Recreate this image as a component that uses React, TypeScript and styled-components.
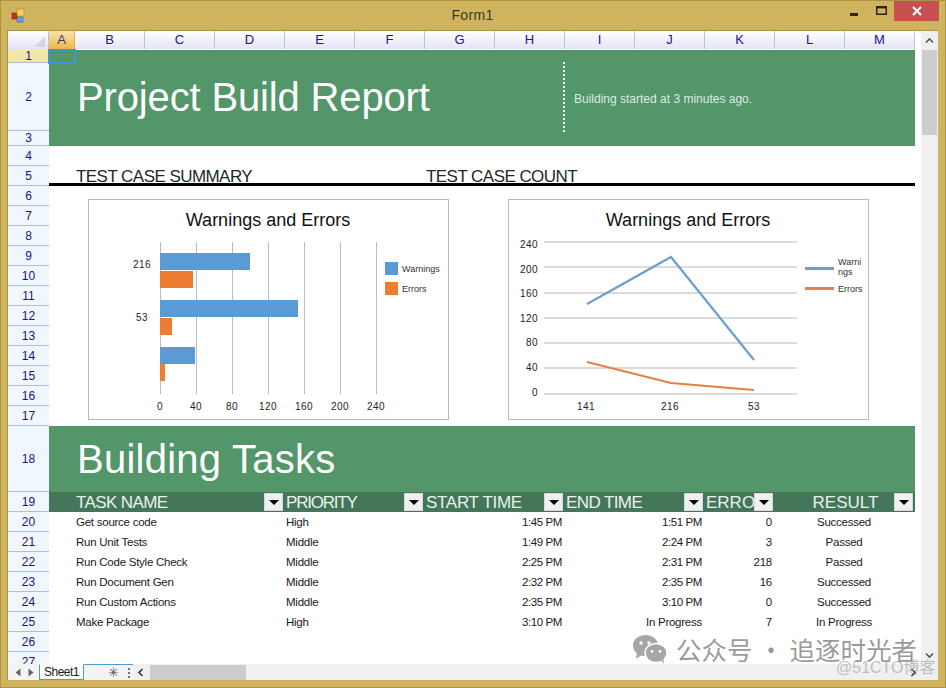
import React from "react";
import styled, { createGlobalStyle } from "styled-components";

const GlobalStyle = createGlobalStyle`
  html, body {
    margin: 0;
    padding: 0;
    background: #cfb35e;
    font-family: "Liberation Sans", Arial, sans-serif;
  }
`;

const Frame = styled.div`
  position: relative;
  width: 946px;
  height: 688px;
  box-sizing: border-box;
  border: 1px solid #ad9443;
  background: #cfb35e;
  display: flex;
  flex-direction: column;
  overflow: hidden;
`;

const TitleBar = styled.div`
  height: 29px;
  flex: none;
  display: flex;
  align-items: flex-start;
  padding: 0 6px 0 10px;
`;

const AppIcon = styled.svg`
  width: 16px;
  height: 16px;
  margin-top: 7px;
  flex: none;
`;

const Caption = styled.div`
  flex: 1;
  text-align: center;
  font-size: 14px;
  letter-spacing: 0.3px;
  line-height: 29px;
  color: #3a3a2c;
  padding-left: 78px;
`;

const WinButton = styled.div<{ $w: number; $close?: boolean }>`
  width: ${(p) => p.$w}px;
  height: 20px;
  display: flex;
  align-items: center;
  justify-content: center;
  background: ${(p) => (p.$close ? "#c75050" : "transparent")};
`;

const Client = styled.div`
  flex: 1;
  margin: 0 7px 7px 6px;
  border-top: 1px solid #ad9443;
  border-left: 1px solid #ad9443;
  background: #ffffff;
  display: grid;
  grid-template-columns: 1fr 17px;
  grid-template-rows: 1fr 16px;
  min-height: 0;
`;

const SheetView = styled.div`
  overflow: hidden;
  display: grid;
  grid-template-columns: 41px 866px;
  grid-template-rows: 19px 1fr;
  min-height: 0;
`;

const Corner = styled.div`
  background: linear-gradient(#ffffff, #e2e2f4);
  border-right: 1px solid #b8c4d8;
  position: relative;
  &::after {
    content: "";
    position: absolute;
    right: 3px;
    bottom: 3px;
    border-style: solid;
    border-width: 0 0 11px 11px;
    border-color: transparent transparent #d6d6e2 transparent;
  }
`;

const ColumnBar = styled.div`
  display: flex;
  border-bottom: 1px solid #ffffff;
`;

const ColumnCell = styled.div<{ $w: number; $active?: boolean }>`
  width: ${(p) => p.$w}px;
  flex: none;
  box-sizing: border-box;
  text-align: center;
  font-size: 13px;
  line-height: 18px;
  border-right: 1px solid ${(p) => (p.$active ? "#e3b54c" : "#b8c4d8")};
  background: ${(p) =>
    p.$active
      ? "linear-gradient(#f9e6a8, #efb54a)"
      : "linear-gradient(#ffffff, #e4e4f6)"};
  color: ${(p) => (p.$active ? "#3a3a70" : "#22109a")};
`;

const RowHeads = styled.div`
  display: flex;
  flex-direction: column;
`;

const RowHead = styled.div<{ $h: number; $active?: boolean }>`
  height: ${(p) => p.$h}px;
  flex: none;
  box-sizing: border-box;
  display: flex;
  align-items: center;
  justify-content: center;
  font-size: 12px;
  color: #1d1280;
  background: ${(p) => (p.$active ? "#f3e7a6" : "#f1f7ff")};
  border-bottom: 1px solid #aebfd2;
`;

const Body = styled.div`
  position: relative;
  display: flex;
  flex-direction: column;
  min-height: 0;
`;

const SelectedCell = styled.div`
  position: absolute;
  left: -1px;
  top: -1px;
  width: 28px;
  height: 15px;
  box-sizing: border-box;
  border: 2px solid #3f97d0;
`;

const Banner = styled.div<{ $h: number }>`
  height: ${(p) => p.$h}px;
  flex: none;
  background: #52966a;
  display: flex;
  align-items: center;
  color: #ffffff;
`;

const BannerTitle = styled.div<{ $w?: number; $spacing: number; $lift?: number }>`
  font-size: 40px;
  letter-spacing: ${(p) => p.$spacing}px;
  padding: 0 0 ${(p) => p.$lift || 0}px 28px;
  width: ${(p) => (p.$w ? `${p.$w}px` : "auto")};
  box-sizing: border-box;
  flex: none;
`;

const BannerDivider = styled.div`
  height: 70px;
  align-self: flex-start;
  margin-top: 12px;
  border-left: 2px dotted #ffffff;
  flex: none;
`;

const BannerNote = styled.div`
  font-size: 12px;
  margin: 1px 0 0 9px;
  color: #dcebe1;
`;

const SectionRow = styled.div`
  margin-top: 20px;
  height: 20px;
  box-sizing: border-box;
  flex: none;
  border-bottom: 3px solid #000000;
  display: flex;
  padding-left: 27px;
`;

const SectionHead = styled.div`
  width: 350px;
  flex: none;
  font-size: 17px;
  line-height: 21px;
  letter-spacing: -0.55px;
  color: #1c2a22;
`;

const ChartRow = styled.div`
  height: 240px;
  flex: none;
  display: flex;
  gap: 59px;
  padding: 13px 0 0 39px;
  box-sizing: border-box;
`;

const ChartBox = styled.div`
  width: 361px;
  height: 221px;
  box-sizing: border-box;
  border: 1px solid #b9b9b9;
  background: #ffffff;
  flex: none;
  svg {
    display: block;
    font-family: "Liberation Sans", Arial, sans-serif;
  }
`;

const TableGrid = styled.div`
  display: grid;
  grid-template-columns: 26px 210px 140px 140px 140px 70px 140px;
  grid-auto-rows: 20px;
`;

const HeadCell = styled.div<{ $center?: boolean; $spacing?: number }>`
  background: #44765a;
  color: #e9f2ec;
  font-size: 17px;
  line-height: 21px;
  height: 20px;
  position: relative;
  padding-left: 1px;
  overflow: hidden;
  white-space: nowrap;
  letter-spacing: ${(p) => p.$spacing ?? -0.6}px;
  text-align: ${(p) => (p.$center ? "center" : "left")};
`;

const FilterButton = styled.span`
  position: absolute;
  right: 2px;
  top: 1px;
  width: 19px;
  height: 18px;
  box-sizing: border-box;
  background: #f0f0f0;
  border: 1px solid #d8d8d8;
  display: flex;
  align-items: center;
  justify-content: center;
  &::after {
    content: "";
    border-style: solid;
    border-width: 5px 5px 0 5px;
    border-color: #000000 transparent transparent transparent;
  }
`;

const DataCell = styled.div<{ $align?: string; $time?: boolean }>`
  font-size: 11.5px;
  line-height: 20px;
  color: #1a1a1a;
  padding: 0 3px 0 1px;
  letter-spacing: ${(p) => (p.$time ? -0.4 : -0.25)}px;
  text-align: ${(p) => p.$align || "left"};
  white-space: nowrap;
`;

const VScroll = styled.div`
  background: #f0f0f0;
  position: relative;
  display: flex;
  flex-direction: column;
  align-items: center;
`;

const ArrowBox = styled.div<{ $h: number }>`
  height: ${(p) => p.$h}px;
  flex: none;
  display: flex;
  align-items: center;
  justify-content: center;
`;

const VThumb = styled.div`
  width: 15px;
  height: 85px;
  background: #cdcdcd;
  flex: none;
`;

const VTrack = styled.div`
  flex: 1;
`;

const TabBar = styled.div`
  grid-column: 1 / 3;
  background: #f0f0f0;
  display: flex;
  align-items: stretch;
`;

const NavArrows = styled.div`
  width: 31px;
  flex: none;
  background: #f3f3f3;
  display: flex;
  align-items: center;
  justify-content: space-around;
  padding: 0 2px 0 4px;
  box-sizing: border-box;
`;

const SheetTab = styled.div`
  width: 45px;
  flex: none;
  box-sizing: border-box;
  background: #ffffff;
  border: 1px solid #4c9bcf;
  border-top: 1px solid #ffffff;
  font-size: 12px;
  line-height: 15px;
  letter-spacing: -0.5px;
  text-align: center;
  color: #1a1a1a;
`;

const TabTail = styled.div`
  width: 49px;
  flex: none;
  background: #f3f3f3;
  border-top: 1px solid #4c9bcf;
  display: flex;
  align-items: center;
  box-sizing: border-box;
  font-size: 13px;
  color: #555555;
`;

const NewSheet = styled.span`
  margin-left: 22px;
  width: 14px;
  text-align: center;
`;

const SplitDots = styled.span`
  margin-left: 7px;
  width: 4px;
  height: 11px;
  background: radial-gradient(circle, #777777 1px, transparent 1.2px) 0 0 / 4px 4px;
`;

const HScroll = styled.div`
  flex: 1;
  display: flex;
  align-items: center;
  background: #f0f0f0;
  padding-left: 3px;
`;

const HThumb = styled.div`
  width: 96px;
  height: 15px;
  background: #cdcdcd;
  flex: none;
`;

const ScrollEnd = styled.div`
  width: 14px;
  display: flex;
  justify-content: center;
  align-items: center;
  flex: none;
`;

const ScrollCorner = styled.div`
  width: 18px;
  flex: none;
`;

const Watermark = styled.div`
  position: absolute;
  left: 631px;
  top: 632px;
  display: flex;
  align-items: center;
  gap: 8px;
  font-family: "Noto Sans CJK SC", sans-serif;
  font-size: 25.5px;
  line-height: 32px;
  color: rgba(125, 125, 125, 0.78);
  white-space: nowrap;
`;

const SubMark = styled.div`
  position: absolute;
  left: 835px;
  top: 657px;
  font-family: "Liberation Sans", "Noto Sans CJK SC", sans-serif;
  font-size: 16px;
  line-height: 20px;
  color: rgba(170, 170, 170, 0.72);
  white-space: nowrap;
`;

const columns: [string, number][] = [
  ["A", 26], ["B", 70], ["C", 70], ["D", 70], ["E", 70], ["F", 70], ["G", 70],
  ["H", 70], ["I", 70], ["J", 70], ["K", 70], ["L", 70], ["M", 70],
];

const rowHeights = [
  13, 68, 15, 20, 20, 20, 20, 20, 20, 20, 20, 20, 20, 20, 20, 20, 20, 66, 20,
  20, 20, 20, 20, 20, 20, 20, 20,
];

const tasks = [
  ["Get source code", "High", "1:45 PM", "1:51 PM", "0", "Successed"],
  ["Run Unit Tests", "Middle", "1:49 PM", "2:24 PM", "3", "Passed"],
  ["Run Code Style Check", "Middle", "2:25 PM", "2:31 PM", "218", "Passed"],
  ["Run Document Gen", "Middle", "2:32 PM", "2:35 PM", "16", "Successed"],
  ["Run Custom Actions", "Middle", "2:35 PM", "3:10 PM", "0", "Successed"],
  ["Make Package", "High", "3:10 PM", "In Progress", "7", "In Progress"],
];

const BLUE = "#5b9bd5";
const ORANGE = "#ed7d31";
const GRID = "#bdbdbd";

const ChartTitle = ({ x }: { x: number }) => (
  <text x={x} y={226} fontSize="18" textAnchor="middle" fill="#111">
    Warnings and Errors
  </text>
);

const BarChart = () => {
  const bars = [
    [253, 90, BLUE], [271, 33, ORANGE],
    [300, 138, BLUE], [318, 12, ORANGE],
    [347, 35, BLUE], [364, 5, ORANGE],
  ] as const;
  return (
    <svg width="359" height="219" viewBox="89 200 359 219">
      <ChartTitle x={268} />
      {[160, 196, 232, 268, 304, 340, 376].map((x) => (
        <line key={x} x1={x + 0.5} x2={x + 0.5} y1={242} y2={394} stroke={GRID} />
      ))}
      {bars.map(([y, w, c]) => (
        <rect key={y} x={160} y={y} width={w} height={17} fill={c} />
      ))}
      {[0, 40, 80, 120, 160, 200, 240].map((v, i) => (
        <text key={v} x={160 + i * 36} y={410} fontSize="10" textAnchor="middle" letterSpacing="0.4" fill="#222">
          {v}
        </text>
      ))}
      <text x={151} y={268} fontSize="10" textAnchor="end" letterSpacing="0.4" fill="#222">216</text>
      <text x={148} y={321} fontSize="10" textAnchor="end" letterSpacing="0.4" fill="#222">53</text>
      <rect x={385} y={262} width={13} height={13} fill={BLUE} />
      <rect x={385} y={282} width={13} height={13} fill={ORANGE} />
      <text x={402} y={272} fontSize="9" fill="#333">Warnings</text>
      <text x={402} y={292} fontSize="9" fill="#333">Errors</text>
    </svg>
  );
};

const LineChart = () => (
  <svg width="359" height="219" viewBox="509 200 359 219">
    <ChartTitle x={688} />
    {[242, 267, 293, 318, 343, 368, 394].map((y) => (
      <line key={y} x1={544} x2={797} y1={y} y2={y} stroke="#cfcfcf" strokeWidth="1.4" />
    ))}
    {[240, 200, 160, 120, 80, 40, 0].map((v, i) => (
      <text key={v} x={538} y={248 + i * 24.6} fontSize="10" textAnchor="end" letterSpacing="0.4" fill="#222">
        {v}
      </text>
    ))}
    <polyline points="587,304 671,257 754,360" fill="none" stroke="#6a9fd0" strokeWidth="2.2" />
    <polyline points="587,362 671,383 754,390" fill="none" stroke="#e58142" strokeWidth="2.2" />
    {[["141", 586], ["216", 670], ["53", 754]].map(([t, x]) => (
      <text key={t} x={x} y={410} fontSize="10" textAnchor="middle" letterSpacing="0.4" fill="#222">
        {t}
      </text>
    ))}
    <line x1={805} x2={834} y1={268.5} y2={268.5} stroke="#6a9fd0" strokeWidth="3" />
    <line x1={805} x2={834} y1={288.5} y2={288.5} stroke="#e58142" strokeWidth="3" />
    <text x={838} y={265} fontSize="9" fill="#333">Warni</text>
    <text x={838} y={275} fontSize="9" fill="#333">ngs</text>
    <text x={838} y={292} fontSize="9" fill="#333">Errors</text>
  </svg>
);

const Chevron = ({ dir, color = "#555" }: { dir: "up" | "down" | "left" | "right"; color?: string }) => {
  const rot = { up: 0, right: 90, down: 180, left: 270 }[dir];
  return (
    <svg width="9" height="9" viewBox="0 0 9 9" style={{ transform: `rotate(${rot}deg)` }}>
      <path d="M1 6.5 L4.5 3 L8 6.5" fill="none" stroke={color} strokeWidth="1.6" />
    </svg>
  );
};

const Tri = ({ left }: { left?: boolean }) => (
  <svg width="6" height="9" viewBox="0 0 6 9">
    <path d={left ? "M5.5 0.5 L0.5 4.5 L5.5 8.5 Z" : "M0.5 0.5 L5.5 4.5 L0.5 8.5 Z"} fill="#666" />
  </svg>
);

const WeChatMark = () => (
  <svg width="36" height="30" viewBox="0 0 36 30">
    <ellipse cx="13.5" cy="11.5" rx="12.5" ry="10.5" fill="#a6a6a6" />
    <path d="M5 18 L4 25 L11 20 Z" fill="#a6a6a6" />
    <ellipse cx="24" cy="19" rx="11" ry="9.5" fill="#a6a6a6" stroke="#ffffff" strokeWidth="1.5" />
    <path d="M29 26 L32 30 L31 23 Z" fill="#a6a6a6" />
    <circle cx="9" cy="9" r="1.7" fill="#fff" />
    <circle cx="17" cy="9" r="1.7" fill="#fff" />
    <circle cx="20" cy="17.5" r="1.4" fill="#fff" />
    <circle cx="28" cy="17.5" r="1.4" fill="#fff" />
  </svg>
);

export default function App() {
  return (
    <>
      <GlobalStyle />
      <Frame>
        <TitleBar>
          <AppIcon viewBox="0 0 16 16">
            <rect x="1" y="5" width="5" height="6" fill="#c8302a" stroke="#7a1a14" strokeWidth="0.6" />
            <rect x="6" y="1" width="7" height="7" fill="#f2d35a" stroke="#a98a2a" strokeWidth="0.6" />
            <rect x="6" y="9" width="6" height="5" fill="#6d9de0" stroke="#3f66a6" strokeWidth="0.6" />
          </AppIcon>
          <Caption>Form1</Caption>
          <WinButton $w={28}>
            <svg width="9" height="10" viewBox="0 0 9 10">
              <rect x="0" y="7" width="8" height="3" fill="#2a2410" />
            </svg>
          </WinButton>
          <WinButton $w={26}>
            <svg width="11" height="10" viewBox="0 0 11 10">
              <rect x="0.75" y="0.75" width="9.5" height="7.5" fill="none" stroke="#2a2410" strokeWidth="1.5" />
              <rect x="0" y="0" width="11" height="2.4" fill="#2a2410" />
            </svg>
          </WinButton>
          <WinButton $w={45} $close>
            <svg width="10" height="10" viewBox="0 0 10 10">
              <path d="M1 1 L9 9 M9 1 L1 9" stroke="#ffffff" strokeWidth="2" />
            </svg>
          </WinButton>
        </TitleBar>

        <Client>
          <SheetView>
            <Corner />
            <ColumnBar>
              {columns.map(([name, w], i) => (
                <ColumnCell key={name} $w={w} $active={i === 0}>
                  {name}
                </ColumnCell>
              ))}
            </ColumnBar>
            <RowHeads>
              {rowHeights.map((h, i) => (
                <RowHead key={i} $h={h} $active={i === 0}>
                  {i + 1}
                </RowHead>
              ))}
            </RowHeads>
            <Body>
              <SelectedCell />
              <Banner $h={96}>
                <BannerTitle $w={514} $spacing={-0.15} $lift={2}>Project Build Report</BannerTitle>
                <BannerDivider />
                <BannerNote>Building started at 3 minutes ago.</BannerNote>
              </Banner>
              <SectionRow>
                <SectionHead>TEST CASE SUMMARY</SectionHead>
                <SectionHead>TEST CASE COUNT</SectionHead>
              </SectionRow>
              <ChartRow>
                <ChartBox>
                  <BarChart />
                </ChartBox>
                <ChartBox>
                  <LineChart />
                </ChartBox>
              </ChartRow>
              <Banner $h={66}>
                <BannerTitle $spacing={0.25}>Building Tasks</BannerTitle>
              </Banner>
              <TableGrid>
                <HeadCell />
                <HeadCell>TASK NAME<FilterButton /></HeadCell>
                <HeadCell $spacing={-1.2}>PRIORITY<FilterButton /></HeadCell>
                <HeadCell $spacing={-0.3}>START TIME<FilterButton /></HeadCell>
                <HeadCell>END TIME<FilterButton /></HeadCell>
                <HeadCell $spacing={0}>ERRO<FilterButton /></HeadCell>
                <HeadCell $center $spacing={0}>RESULT<FilterButton /></HeadCell>
                {tasks.map((t) => (
                  <React.Fragment key={t[0]}>
                    <DataCell />
                    <DataCell>{t[0]}</DataCell>
                    <DataCell>{t[1]}</DataCell>
                    <DataCell $align="right" $time>{t[2]}</DataCell>
                    <DataCell $align="right" $time={t[3] !== "In Progress"}>{t[3]}</DataCell>
                    <DataCell $align="right">{t[4]}</DataCell>
                    <DataCell $align="center">{t[5]}</DataCell>
                  </React.Fragment>
                ))}
              </TableGrid>
            </Body>
          </SheetView>
          <VScroll>
            <ArrowBox $h={19}>
              <Chevron dir="up" />
            </ArrowBox>
            <VThumb />
            <VTrack />
            <ArrowBox $h={18}>
              <Chevron dir="down" />
            </ArrowBox>
          </VScroll>
          <TabBar>
            <NavArrows>
              <Tri left />
              <Tri />
            </NavArrows>
            <SheetTab>Sheet1</SheetTab>
            <TabTail>
              <NewSheet>✳</NewSheet>
              <SplitDots />
            </TabTail>
            <ScrollEnd>
              <Chevron dir="left" color="#333" />
            </ScrollEnd>
            <HScroll>
              <HThumb />
            </HScroll>
            <ScrollEnd>
              <Chevron dir="right" color="#333" />
            </ScrollEnd>
            <ScrollCorner />
          </TabBar>
        </Client>
        <Watermark>
          <WeChatMark />
          公众号 · 追逐时光者
        </Watermark>
        <SubMark>@51CTO博客</SubMark>
      </Frame>
    </>
  );
}
